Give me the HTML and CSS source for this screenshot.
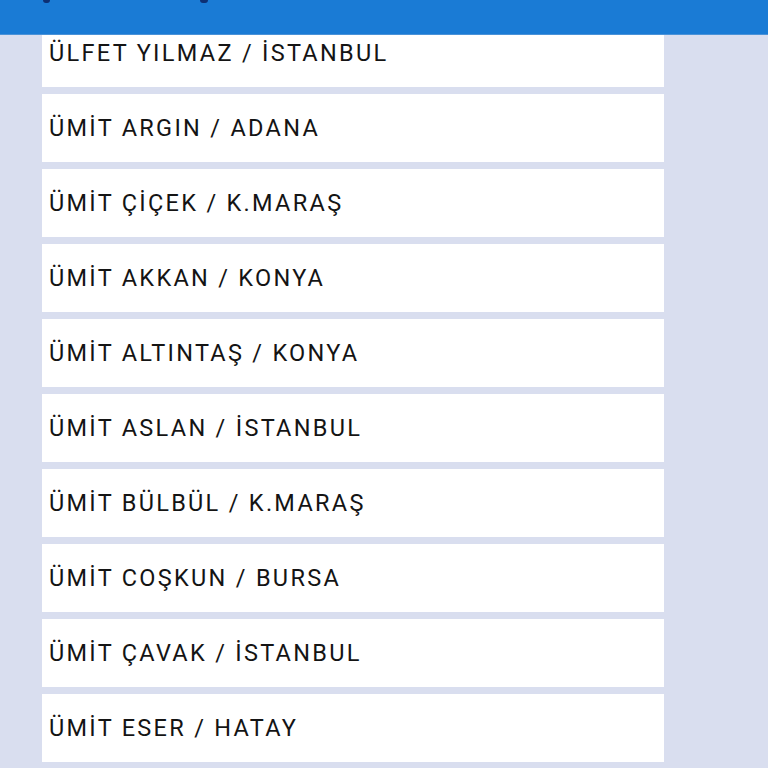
FILE: index.html
```html
<!DOCTYPE html>
<html lang="tr">
<head>
    <meta charset="UTF-8">
    <meta name="viewport" content="width=device-width, initial-scale=1.0">
    <title>Üye Listesi</title>
    <link rel="stylesheet" href="styles.css">
</head>
<body>
    <header class="top-bar">
        <div class="top-bar-title"><span class="mark mark-left"></span><span class="mark mark-right"></span></div>
    </header>

    <div class="list">
        <div class="list-item">ÜLFET YILMAZ / İSTANBUL</div>
        <div class="list-item">ÜMİT ARGIN / ADANA</div>
        <div class="list-item">ÜMİT ÇİÇEK / K.MARAŞ</div>
        <div class="list-item">ÜMİT AKKAN / KONYA</div>
        <div class="list-item">ÜMİT ALTINTAŞ / KONYA</div>
        <div class="list-item">ÜMİT ASLAN / İSTANBUL</div>
        <div class="list-item">ÜMİT BÜLBÜL / K.MARAŞ</div>
        <div class="list-item">ÜMİT COŞKUN / BURSA</div>
        <div class="list-item">ÜMİT ÇAVAK / İSTANBUL</div>
        <div class="list-item">ÜMİT ESER / HATAY</div>
    </div>
</body>
</html>
```

FILE: styles.css
```css
html, body { margin: 0; padding: 0; }
body { background-color: #d9deef; font-family: Roboto, "Noto Sans", sans-serif; overflow: hidden; }

.top-bar {
    position: fixed;
    top: 0;
    left: 0;
    right: 0;
    height: 34px;
    background-color: #1a7bd5;
    border-bottom: 1px solid #4a92d8;
    z-index: 10;
}
.top-bar-title { display: flex; height: 3px; }
.mark { display: block; width: 7px; height: 3px; background-color: #0d2f73; border-radius: 0 0 4px 4px; }
.mark-left { margin-left: 43px; }
.mark-right { margin-left: 150px; width: 8px; }

.list {
    display: flex;
    flex-direction: column;
    gap: 7px;
    width: 622px;
    margin: 19px 0 0 42px;
}
.list-item {
    height: 68px;
    display: flex;
    align-items: center;
    padding-left: 7px;
    background-color: #fff;
    color: #141414;
    font-size: 23.5px;
    letter-spacing: 2.3px;
}
```
